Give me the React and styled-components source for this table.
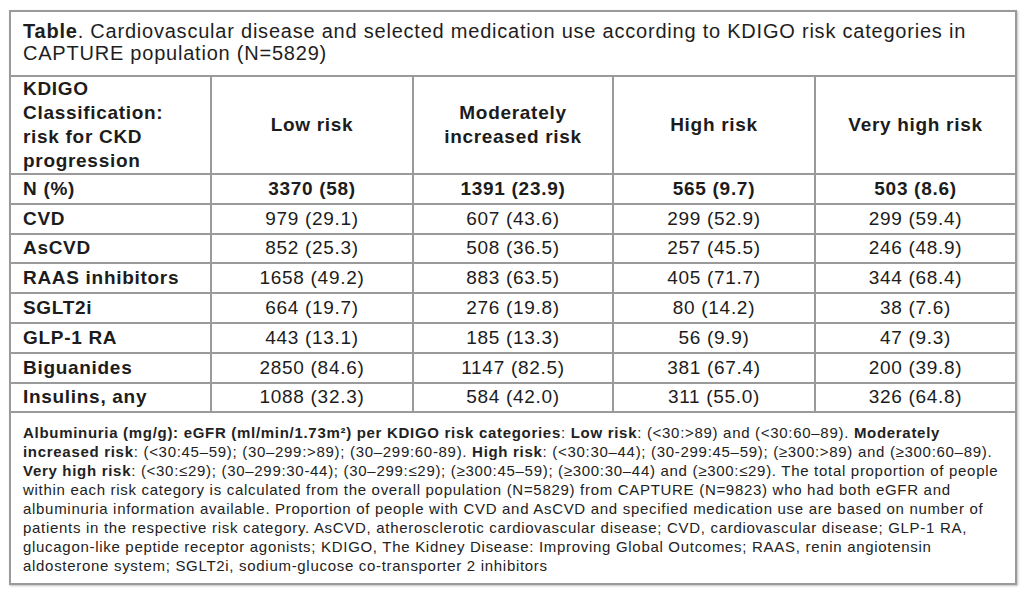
import React from 'react';
import styled, { createGlobalStyle } from 'styled-components';

const GlobalStyle = createGlobalStyle`
  html, body {
    margin: 0;
    padding: 0;
    background: #ffffff;
  }
  body {
    font-family: "Liberation Sans", Arial, sans-serif;
    color: #1e1e1e;
  }
`;

const Page = styled.div`
  width: 1024px;
  height: 601px;
  padding: 10px 9px 0 9px;
  box-sizing: border-box;
`;

const Table = styled.table`
  width: 1006px;
  border-collapse: collapse;
  table-layout: fixed;
  border: 2px solid #8c8c8c;
  box-shadow: 1px 1px 2px rgba(0, 0, 0, 0.25);
`;

const Cell = styled.td`
  border: 2px solid #9a9a9a;
  padding: ${(p) => p.pad || '0 12px'};
  height: ${(p) => p.h || '27.8px'};
  font-size: 19px;
  letter-spacing: 0.7px;
  line-height: 24px;
  font-weight: ${(p) => (p.bold ? 700 : 400)};
  text-align: ${(p) => p.align || 'center'};
  vertical-align: middle;
  color: #1c1c1c;
  white-space: nowrap;
`;

const Caption = styled.td`
  border: 2px solid #9a9a9a;
  padding: 8px 12px 6px;
  height: 49px;
  font-size: 20px;
  letter-spacing: 0.78px;
  line-height: 22px;
  vertical-align: top;
  white-space: nowrap;
`;

const Notes = styled.td`
  border: 2px solid #9a9a9a;
  padding: 10px 12px 8px;
  font-size: 15px;
  letter-spacing: 0.7px;
  line-height: 19px;
  color: #222;
  vertical-align: top;
  white-space: nowrap;
`;

const B = styled.b`
  font-weight: 700;
`;

const header = [
  ['Low risk'],
  ['Moderately', 'increased risk'],
  ['High risk'],
  ['Very high risk'],
];

const rows = [
  ['N (%)', '3370 (58)', '1391 (23.9)', '565 (9.7)', '503 (8.6)'],
  ['CVD', '979 (29.1)', '607 (43.6)', '299 (52.9)', '299 (59.4)'],
  ['AsCVD', '852 (25.3)', '508 (36.5)', '257 (45.5)', '246 (48.9)'],
  ['RAAS inhibitors', '1658 (49.2)', '883 (63.5)', '405 (71.7)', '344 (68.4)'],
  ['SGLT2i', '664 (19.7)', '276 (19.8)', '80 (14.2)', '38 (7.6)'],
  ['GLP-1 RA', '443 (13.1)', '185 (13.3)', '56 (9.9)', '47 (9.3)'],
  ['Biguanides', '2850 (84.6)', '1147 (82.5)', '381 (67.4)', '200 (39.8)'],
  ['Insulins, any', '1088 (32.3)', '584 (42.0)', '311 (55.0)', '326 (64.8)'],
];

export default function App() {
  return (
    <Page>
      <GlobalStyle />
      <Table>
        <colgroup>
          <col style={{ width: 201 }} />
          <col style={{ width: 202 }} />
          <col style={{ width: 200 }} />
          <col style={{ width: 202 }} />
          <col style={{ width: 201 }} />
        </colgroup>
        <tbody>
          <tr>
            <Caption colSpan={5}>
              <B>Table</B>. Cardiovascular disease and selected medication use according to KDIGO risk categories in
              <br />
              CAPTURE population (N=5829)
            </Caption>
          </tr>
          <tr>
            <Cell bold align="left" h="95px">
              KDIGO
              <br />
              Classification:
              <br />
              risk for CKD
              <br />
              progression
            </Cell>
            {header.map((h) => (
              <Cell key={h[0]} bold pad="0 8px">
                {h.map((line, k) => (
                  <React.Fragment key={line}>
                    {k > 0 && <br />}
                    {line}
                  </React.Fragment>
                ))}
              </Cell>
            ))}
          </tr>
          {rows.map((r, i) => (
            <tr key={r[0]}>
              {r.map((c, j) => (
                <Cell key={j} bold={j === 0 || i === 0} align={j === 0 ? 'left' : 'center'}>
                  {c}
                </Cell>
              ))}
            </tr>
          ))}
          <tr>
            <Notes colSpan={5}>
              <B>Albuminuria (mg/g): eGFR (ml/min/1.73m²) per KDIGO risk categories</B>: <B>Low risk</B>: (&lt;30:&gt;89) and (&lt;30:60–89). <B>Moderately</B>
              <br />
              <B>increased risk</B>: (&lt;30:45–59); (30–299:&gt;89); (30–299:60-89). <B>High risk</B>: (&lt;30:30–44); (30-299:45–59); (≥300:&gt;89) and (≥300:60–89).
              <br />
              <B>Very high risk</B>: (&lt;30:≤29); (30–299:30-44); (30–299:≤29); (≥300:45–59); (≥300:30–44) and (≥300:≤29). The total proportion of people
              <br />
              within each risk category is calculated from the overall population (N=5829) from CAPTURE (N=9823) who had both eGFR and
              <br />
              albuminuria information available. Proportion of people with CVD and AsCVD and specified medication use are based on number of
              <br />
              patients in the respective risk category. AsCVD, atherosclerotic cardiovascular disease; CVD, cardiovascular disease; GLP-1 RA,
              <br />
              glucagon-like peptide receptor agonists; KDIGO, The Kidney Disease: Improving Global Outcomes; RAAS, renin angiotensin
              <br />
              aldosterone system; SGLT2i, sodium-glucose co-transporter 2 inhibitors
            </Notes>
          </tr>
        </tbody>
      </Table>
    </Page>
  );
}
